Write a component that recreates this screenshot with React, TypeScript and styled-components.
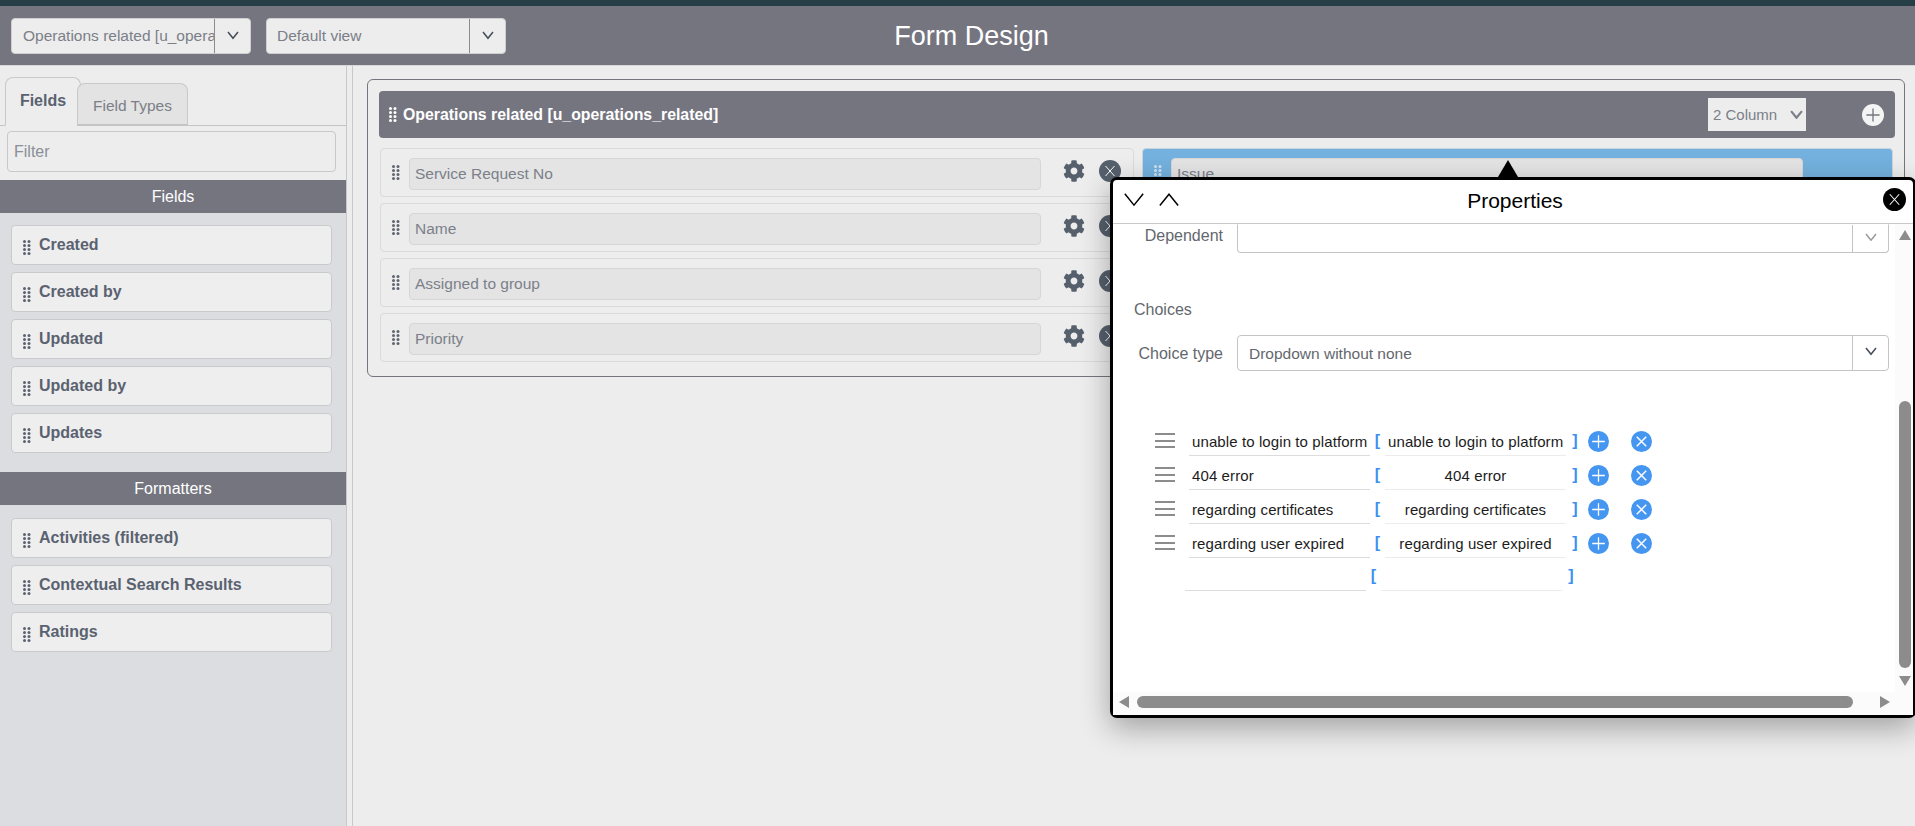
import React from "react";
import styled, { createGlobalStyle } from "styled-components";
import { FaCog } from "react-icons/fa";

const Global = createGlobalStyle`
  html, body {
    margin: 0;
    padding: 0;
    height: 100%;
    overflow: hidden;
    background: #ededed;
    font-family: "Liberation Sans", Arial, sans-serif;
  }
  * { box-sizing: border-box; }
`;

const Dots = ({ light }: { light?: boolean }) => (
  <svg width="8" height="15" viewBox="0 0 8 15" fill={light ? "#cfe3f2" : "currentColor"}>
    {[1.5, 5.5, 9.5, 13.5].map((y) =>
      [1.5, 6].map((x) => <circle key={x + "-" + y} cx={x} cy={y} r="1.5" />)
    )}
  </svg>
);

const Chevron = ({ up, size = 12, weight = 1.5 }: { up?: boolean; size?: number; weight?: number }) => (
  <svg width={size} height={size * 0.7} viewBox="0 0 12 8" fill="none" stroke="currentColor" strokeWidth={weight}>
    <path d={up ? "M1 7.2 6 1l5 6.2" : "M1 .8 6 7l5-6.2"} />
  </svg>
);

const CloseDisc = ({ size, bg }: { size: number; bg: string }) => (
  <svg width={size} height={size} viewBox="0 0 22 22">
    <circle cx="11" cy="11" r="11" fill={bg} />
    <path d="M6.5 6 15.5 16M15.5 6 6.5 16" stroke="#fff" strokeWidth="1" fill="none" />
  </svg>
);

const PlusDisc = ({ size, bg, fg }: { size: number; bg: string; fg: string }) => (
  <svg width={size} height={size} viewBox="0 0 20 20">
    <circle cx="10" cy="10" r="10" fill={bg} />
    <path d="M10 4v12M4 10h12" stroke={fg} strokeWidth="1.2" fill="none" />
  </svg>
);

const BlueX = () => (
  <svg width="21" height="21" viewBox="0 0 20 20">
    <circle cx="10" cy="10" r="10" fill="#4596f0" />
    <path d="M5.5 5.5 14.5 14.5M14.5 5.5 5.5 14.5" stroke="#fff" strokeWidth="1.4" fill="none" />
  </svg>
);

const Page = styled.div`
  width: 1915px;
  height: 826px;
  position: relative;
  overflow: hidden;
  display: flex;
  flex-direction: column;
  background: #ededed;
`;

const TopStrip = styled.div`
  height: 6px;
  background: #263f46;
`;

const Header = styled.header`
  height: 60px;
  background: #75757f;
  border-bottom: 1px solid #d8d8d8;
  display: flex;
  align-items: center;
  padding: 0 0 0 11px;
  gap: 15px;
  position: relative;
`;

const Pick = styled.div`
  width: 240px;
  height: 36px;
  background: #ededed;
  border: 1px solid #cfcfcf;
  border-radius: 4px;
  display: flex;
  color: #7b7f88;
  font-size: 15.5px;
`;

const PickText = styled.div`
  flex: 1;
  min-width: 0;
  overflow: hidden;
  white-space: nowrap;
  line-height: 34px;
  padding-left: ${(p: { $pad: number }) => p.$pad}px;
`;

const PickArrow = styled.div`
  width: 36px;
  border-left: 1px solid #8c8c8c;
  display: flex;
  align-items: center;
  justify-content: center;
  color: #444c58;
`;

const Title = styled.div`
  position: absolute;
  left: 0;
  right: 0;
  padding-left: 28px;
  text-align: center;
  color: #fff;
  font-size: 27px;
  line-height: 60px;
`;

const Body = styled.div`
  flex: 1;
  display: flex;
  min-height: 0;
`;

const Side = styled.aside`
  width: 347px;
  background: #dcdde0;
  border-right: 1px solid #c8c8c8;
  display: flex;
  flex-direction: column;
`;

const SideTop = styled.div`
  background: #ededed;
  height: 114px;
`;

const Tabs = styled.div`
  height: 60px;
  padding: 11px 0 0 5px;
  display: flex;
  align-items: flex-end;
  border-bottom: 1px solid #c4c4c4;
`;

const Tab = styled.div<{ $active?: boolean }>`
  width: ${(p) => (p.$active ? 76 : 111)}px;
  height: ${(p) => (p.$active ? 49 : 43)}px;
  margin-bottom: -1px;
  margin-left: ${(p) => (p.$active ? 0 : -4)}px;
  background: ${(p) => (p.$active ? "#ededed" : "#e3e3e3")};
  border: 1px solid #c9c9c9;
  border-bottom: ${(p) => (p.$active ? "1px solid #ededed" : "2px solid #c4c4c4")};
  border-radius: 8px 8px 0 0;
  color: ${(p) => (p.$active ? "#5a6270" : "#7b7f88")};
  font-weight: ${(p) => (p.$active ? 700 : 400)};
  font-size: ${(p) => (p.$active ? 16 : 15.5)}px;
  text-align: center;
  line-height: ${(p) => (p.$active ? 46 : 43)}px;
  position: relative;
  z-index: ${(p) => (p.$active ? 0 : 1)};
`;

const FilterBox = styled.div`
  margin: 5px 10px 0 7px;
  height: 41px;
  border: 1px solid #c9c9c9;
  border-radius: 4px;
  color: #8a8f98;
  font-size: 16px;
  line-height: 39px;
  padding-left: 6px;
`;

const Band = styled.div<{ $top?: number }>`
  height: 33px;
  margin-top: ${(p) => p.$top ?? 0}px;
  background: #75757f;
  color: #fff;
  text-align: center;
  font-size: 16px;
  line-height: 33px;
  flex-shrink: 0;
`;

const ItemList = styled.div<{ $top: number }>`
  padding: ${(p) => p.$top}px 14px 0 11px;
  display: flex;
  flex-direction: column;
  gap: 7px;
`;

const Item = styled.div`
  height: 40px;
  background: #eeeeee;
  border: 1px solid #c9cacc;
  border-radius: 4px;
  display: flex;
  align-items: center;
  padding: 0 0 1px 11px;
  gap: 8px;
  color: #5a6270;
  font-size: 16px;
  font-weight: 700;
`;

const ItemDots = styled.span`
  display: flex;
  margin-top: 6px;
`;

const SideGap = styled.div`
  width: 5px;
  flex-shrink: 0;
`;

const Main = styled.main`
  flex: 1;
  border-left: 1px solid #c8c8c8;
  padding: 13px 10px 0 14px;
`;

const Group = styled.section`
  height: 298px;
  border: 1px solid #75757f;
  border-radius: 6px;
  padding: 11px 9px 0 11px;
`;

const GroupHead = styled.div`
  height: 47px;
  background: #75757f;
  border-radius: 4px;
  display: flex;
  align-items: center;
  color: #fff;
  padding: 0 11px 0 10px;
  font-size: 15.85px;
  font-weight: 700;
  gap: 6px;
`;

const HeadName = styled.div`
  flex: 1;
`;

const ColumnSelect = styled.div`
  width: 98px;
  height: 33px;
  background: #ededed;
  color: #7b7f88;
  font-size: 15px;
  font-weight: 400;
  display: flex;
  align-items: center;
  justify-content: space-between;
  padding: 0 3px 0 5px;
  margin-right: 50px;
`;

const Columns = styled.div`
  display: grid;
  grid-template-columns: 754px 751px;
  column-gap: 8px;
  margin-top: 10px;
  margin-left: 1px;
`;

const ColumnStack = styled.div`
  display: flex;
  flex-direction: column;
  gap: 6px;
`;

const FieldRow = styled.div<{ $selected?: boolean }>`
  height: 49px;
  border: 1px solid ${(p) => (p.$selected ? "#c9d6e0" : "#dadada")};
  border-radius: 4px;
  background: ${(p) => (p.$selected ? "#74b1de" : "transparent")};
  display: flex;
  align-items: center;
  padding: 0 0 0 11px;
  color: ${(p) => (p.$selected ? "#cfe3f2" : "#5f6570")};
`;

const FieldInput = styled.div<{ $w: number }>`
  width: ${(p) => p.$w}px;
  height: 32px;
  margin-left: 9px;
  margin-top: 3px;
  background: #e4e4e4;
  border: 1px solid #d6d6d6;
  border-radius: 4px;
  color: #7b808a;
  font-size: 15.5px;
  line-height: 30px;
  padding-left: 5px;
`;

const FieldTools = styled.div`
  display: flex;
  align-items: center;
  margin-left: 22px;
  margin-top: -4px;
  gap: 14px;
  color: #56606c;
`;

const Popup = styled.div`
  position: absolute;
  left: 1110px;
  top: 177px;
  width: 806px;
  height: 541px;
  background: #fff;
  border: 3px solid #000;
  border-radius: 7px;
  box-shadow: 0 10px 30px rgba(0, 0, 0, 0.32);
  display: flex;
  flex-direction: column;
  color: #000;
`;

const PopupArrow = styled.div`
  position: absolute;
  left: 385px;
  top: -20px;
  width: 0;
  height: 0;
  border-left: 10px solid transparent;
  border-right: 10px solid transparent;
  border-bottom: 17px solid #000;
`;

const PopupHead = styled.div`
  height: 44px;
  flex-shrink: 0;
  border-bottom: 1px solid #c9c9c9;
  display: flex;
  align-items: center;
  padding: 0 0 3px 10px;
  gap: 13px;
  position: relative;
`;

const PopupTitle = styled.div`
  position: absolute;
  left: 0;
  top: 0;
  width: 804px;
  text-align: center;
  font-size: 21px;
  line-height: 42px;
`;

const CloseSlot = styled.div`
  position: absolute;
  left: 770px;
  top: 8px;
  display: flex;
`;

const ScrollArea = styled.div`
  flex: 1;
  min-height: 0;
  display: grid;
  grid-template-columns: 1fr 18px;
  grid-template-rows: 1fr 23px;
`;

const Content = styled.div`
  overflow: hidden;
  padding-left: 19px;
`;

const FormRow = styled.div<{ $top: number }>`
  display: flex;
  align-items: center;
  margin-top: ${(p) => p.$top}px;
`;

const FormLabel = styled.div<{ $raise?: number }>`
  width: 91px;
  flex-shrink: 0;
  white-space: nowrap;
  text-align: right;
  font-size: 16px;
  color: #63676d;
  margin-bottom: ${(p) => p.$raise ?? -2}px;
`;

const FormSelect = styled.div<{ $h: number; $dim?: boolean }>`
  margin-left: 14px;
  width: 652px;
  height: ${(p) => p.$h}px;
  border: 1px solid #c4c4c4;
  border-top-color: ${(p) => (p.$dim ? "transparent" : "#c4c4c4")};
  border-radius: ${(p) => (p.$dim ? "0 0 4px 4px" : "4px")};
  display: flex;
  font-size: 15.5px;
  color: #63676d;
`;

const SelectValue = styled.div`
  flex: 1;
  line-height: 35px;
  padding-left: 11px;
`;

const SelectArrow = styled.div<{ $dim?: boolean }>`
  width: 36px;
  border-left: 1px solid #c4c4c4;
  display: flex;
  align-items: center;
  justify-content: center;
  padding-bottom: 3px;
  color: ${(p) => (p.$dim ? "#9a9a9a" : "#444c58")};
`;

const SectionLabel = styled.div`
  margin-top: 49px;
  margin-left: 2px;
  font-size: 16px;
  line-height: 16px;
  color: #63676d;
`;

const ChoiceRows = styled.div`
  margin-top: 51px;
  display: flex;
  flex-direction: column;
  padding-left: 23px;
`;

const ChoiceRow = styled.div<{ $blank?: boolean }>`
  height: ${(p) => (p.$blank ? 33 : 34)}px;
  display: flex;
  align-items: flex-end;
  margin-left: ${(p) => (p.$blank ? -4 : 0)}px;
`;

const Burger = styled.div`
  width: 20px;
  height: 15px;
  margin: 0 14px 8px 0;
  border-top: 2px solid #8c8c8c;
  border-bottom: 2px solid #8c8c8c;
  position: relative;
  &::after {
    content: "";
    position: absolute;
    left: 0;
    right: 0;
    top: 4.5px;
    height: 2px;
    background: #8c8c8c;
  }
`;

const BurgerGap = styled.div`
  width: 34px;
`;

const ChoiceInput = styled.div<{ $center?: boolean; $light?: boolean }>`
  width: 181px;
  height: 29px;
  border-bottom: 1px solid ${(p) => (p.$light ? "#ececec" : "#dcdcdc")};
  font-size: 15px;
  letter-spacing: 0.1px;
  line-height: 29px;
  padding: 0 3px;
  white-space: nowrap;
  color: #1c1c1c;
  text-align: ${(p) => (p.$center ? "center" : "left")};
`;

const Bracket = styled.div<{ $close?: boolean }>`
  width: ${(p) => (p.$close ? 18 : 15)}px;
  height: 29px;
  color: #3d8fef;
  font-size: 16px;
  font-weight: 700;
  line-height: 28px;
  text-align: center;
`;

const RowAction = styled.div<{ $gap: number }>`
  display: flex;
  margin-bottom: 4px;
  margin-left: ${(p) => p.$gap}px;
`;

const TrackV = styled.div`
  background: #fbfbfb;
  position: relative;
`;

const ThumbV = styled.div`
  position: absolute;
  right: 2px;
  top: 177px;
  bottom: 24px;
  width: 12px;
  background: #8c8c8c;
  border-radius: 6px;
`;

const Tri = styled.div<{ $dir: "up" | "down" | "left" | "right"; $x?: number; $y?: number }>`
  position: absolute;
  width: 0;
  height: 0;
  left: ${(p) => p.$x ?? 0}px;
  top: ${(p) => p.$y ?? 0}px;
  ${(p) =>
    p.$dir === "up"
      ? "border-left:6px solid transparent;border-right:6px solid transparent;border-bottom:10px solid #8c8c8c;"
      : p.$dir === "down"
      ? "border-left:6px solid transparent;border-right:6px solid transparent;border-top:10px solid #8c8c8c;"
      : p.$dir === "left"
      ? "border-top:6px solid transparent;border-bottom:6px solid transparent;border-right:10px solid #8c8c8c;"
      : "border-top:6px solid transparent;border-bottom:6px solid transparent;border-left:10px solid #8c8c8c;"}
`;

const TrackH = styled.div`
  background: #fbfbfb;
  position: relative;
`;

const ThumbH = styled.div`
  position: absolute;
  left: 24px;
  top: 4px;
  width: 716px;
  height: 12px;
  background: #8c8c8c;
  border-radius: 6px;
`;

const Corner = styled.div`
  background: #fbfbfb;
`;

const leftFields = ["Service Request No", "Name", "Assigned to group", "Priority"];
const fieldList = ["Created", "Created by", "Updated", "Updated by", "Updates"];
const formatters = ["Activities (filtered)", "Contextual Search Results", "Ratings"];
const choices = [
  { label: "unable to login to platform", value: "unable to login to platform" },
  { label: "404 error", value: "404 error" },
  { label: "regarding certificates", value: "regarding certificates" },
  { label: "regarding user expired", value: "regarding user expired" },
];

const SideItem = ({ name }: { name: string }) => (
  <Item>
    <ItemDots>
      <Dots />
    </ItemDots>
    {name}
  </Item>
);

export default function App() {
  return (
    <Page>
      <Global />
      <TopStrip />
      <Header>
        <Title>Form Design</Title>
        <Pick>
          <PickText $pad={11}>Operations related [u_operations_related]</PickText>
          <PickArrow>
            <Chevron />
          </PickArrow>
        </Pick>
        <Pick>
          <PickText $pad={10}>Default view</PickText>
          <PickArrow>
            <Chevron />
          </PickArrow>
        </Pick>
      </Header>
      <Body>
        <Side>
          <SideTop>
            <Tabs>
              <Tab $active>Fields</Tab>
              <Tab>Field Types</Tab>
            </Tabs>
            <FilterBox>Filter</FilterBox>
          </SideTop>
          <Band>Fields</Band>
          <ItemList $top={12}>
            {fieldList.map((n) => (
              <SideItem key={n} name={n} />
            ))}
          </ItemList>
          <Band $top={19}>Formatters</Band>
          <ItemList $top={13}>
            {formatters.map((n) => (
              <SideItem key={n} name={n} />
            ))}
          </ItemList>
        </Side>
        <SideGap />
        <Main>
          <Group>
            <GroupHead>
              <Dots />
              <HeadName>Operations related [u_operations_related]</HeadName>
              <ColumnSelect>
                2 Column
                <Chevron size={13} weight={2} />
              </ColumnSelect>
              <PlusDisc size={22} bg="#f4f4f4" fg="#75757f" />
            </GroupHead>
            <Columns>
              <ColumnStack>
                {leftFields.map((n) => (
                  <FieldRow key={n}>
                    <Dots />
                    <FieldInput $w={632}>{n}</FieldInput>
                    <FieldTools>
                      <FaCog size={22} />
                      <CloseDisc size={22} bg="#56606c" />
                    </FieldTools>
                  </FieldRow>
                ))}
              </ColumnStack>
              <ColumnStack>
                <FieldRow $selected>
                  <Dots light />
                  <FieldInput $w={632}>Issue</FieldInput>
                </FieldRow>
              </ColumnStack>
            </Columns>
          </Group>
        </Main>
      </Body>
      <Popup>
        <PopupArrow />
        <PopupHead>
          <PopupTitle>Properties</PopupTitle>
          <Chevron size={22} weight={0.8} />
          <Chevron size={22} weight={0.8} up />
          <CloseSlot>
            <CloseDisc size={23} bg="#000" />
          </CloseSlot>
        </PopupHead>
        <ScrollArea>
          <Content>
            <FormRow $top={0}>
              <FormLabel $raise={5}>Dependent</FormLabel>
              <FormSelect $h={29} $dim>
                <SelectValue />
                <SelectArrow $dim>
                  <Chevron size={12} />
                </SelectArrow>
              </FormSelect>
            </FormRow>
            <SectionLabel>Choices</SectionLabel>
            <FormRow $top={17}>
              <FormLabel>Choice type</FormLabel>
              <FormSelect $h={36}>
                <SelectValue>Dropdown without none</SelectValue>
                <SelectArrow>
                  <Chevron size={12} />
                </SelectArrow>
              </FormSelect>
            </FormRow>
            <ChoiceRows>
              {choices.map((c) => (
                <ChoiceRow key={c.label}>
                  <Burger />
                  <ChoiceInput>{c.label}</ChoiceInput>
                  <Bracket>[</Bracket>
                  <ChoiceInput $center $light>
                    {c.value}
                  </ChoiceInput>
                  <Bracket $close>]</Bracket>
                  <RowAction $gap={4}>
                    <PlusDisc size={21} bg="#4596f0" fg="#fff" />
                  </RowAction>
                  <RowAction $gap={22}>
                    <BlueX />
                  </RowAction>
                </ChoiceRow>
              ))}
              <ChoiceRow $blank>
                <BurgerGap />
                <ChoiceInput />
                <Bracket>[</Bracket>
                <ChoiceInput $light />
                <Bracket $close>]</Bracket>
              </ChoiceRow>
            </ChoiceRows>
          </Content>
          <TrackV>
            <Tri $dir="up" $x={4} $y={6} />
            <ThumbV />
            <Tri $dir="down" $x={4} $y={452} />
          </TrackV>
          <TrackH>
            <Tri $dir="left" $x={6} $y={4} />
            <ThumbH />
            <Tri $dir="right" $x={767} $y={4} />
          </TrackH>
          <Corner />
        </ScrollArea>
      </Popup>
    </Page>
  );
}
